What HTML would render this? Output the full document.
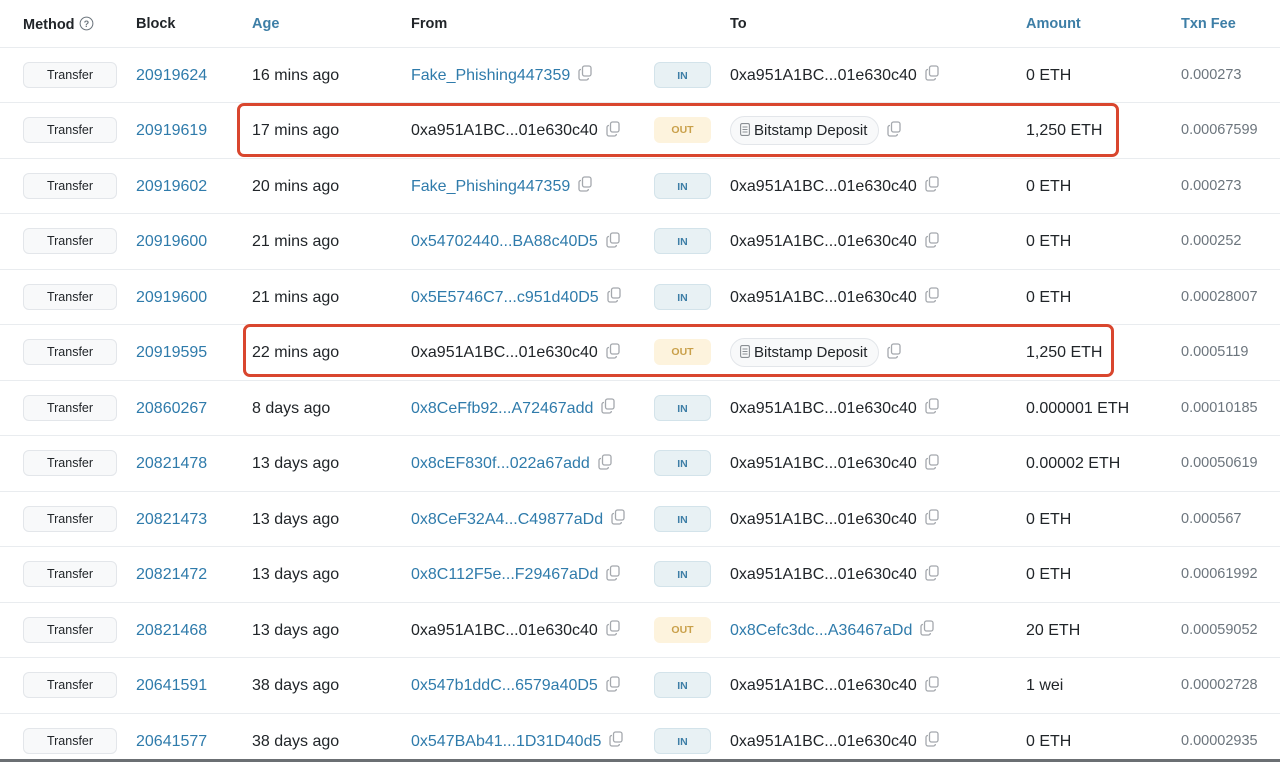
<!DOCTYPE html>
<html><head><meta charset="utf-8">
<style>
*{margin:0;padding:0;box-sizing:border-box}
body{width:1280px;height:762px;overflow:hidden;background:#fff;font-family:"Liberation Sans",Arial,sans-serif;color:#212529;position:relative}
.h{position:absolute;top:16px;font-size:14.5px;font-weight:bold;color:#212529}
.h.b{color:#3d7ea6}
.r{position:absolute;left:0;width:1280px;height:55.5px;border-top:1px solid #e9ecef}
.c{position:absolute;top:0;height:55px;line-height:55px;font-size:16px;white-space:nowrap}
.l{color:#2f7bab}
.m{position:absolute;left:23px;top:14px;width:94px;height:26px;border:1px solid #e3e6ea;background:#f8f9fa;border-radius:6px;font-size:12.5px;text-align:center;line-height:24px;color:#212529}
.bd{position:absolute;left:654px;top:14px;width:57px;height:26px;border-radius:6px;font-size:10.5px;font-weight:bold;text-align:center;line-height:26px}
.in{background:#e8f1f4;border:1px solid #d3e3ea;color:#3d7ea6}
.out{background:#fdf3dd;color:#c9a04a}
.fee{font-size:14.5px;color:#6c757d}
.cp{display:inline-block;vertical-align:middle;margin-left:8px;margin-top:-4px}
.pill{position:absolute;left:730px;top:13px;height:29px;width:149px;padding:0 0 0 9px;border:1px solid #e3e6ea;background:#f8f9fa;border-radius:15px;line-height:27px;font-size:15px}
.box{position:absolute;border:3px solid #d9462e;border-radius:7px}
</style></head><body>
<svg width="0" height="0" style="position:absolute"><defs><symbol id="cp" viewBox="0 0 14 16"><rect x="4.5" y="1" width="8.5" height="10" rx="2" fill="none" stroke="#a4a8ad" stroke-width="1.3"/><path d="M3 4.5H2.8A1.8 1.8 0 0 0 1 6.3V13a2 2 0 0 0 2 2h5.5a1.8 1.8 0 0 0 1.8-1.8V13" fill="none" stroke="#a4a8ad" stroke-width="1.3"/></symbol></defs></svg>

<div class="h" style="left:23px">Method <svg width="15" height="15" viewBox="0 0 16 16" style="vertical-align:-2px"><circle cx="8" cy="8" r="6.8" fill="none" stroke="#6c757d" stroke-width="1.1"/><text x="8" y="11.5" font-size="9.5" text-anchor="middle" fill="#6c757d" font-family="Liberation Sans">?</text></svg></div>
<div class="h" style="left:136px">Block</div>
<div class="h b" style="left:252px">Age</div>
<div class="h" style="left:411px">From</div>
<div class="h" style="left:730px">To</div>
<div class="h b" style="left:1026px">Amount</div>
<div class="h b" style="left:1181px">Txn Fee</div>

<div class="r" style="top:46.5px"><div class="m">Transfer</div><div class="c l" style="left:136px">20919624</div><div class="c" style="left:252px">16 mins ago</div><div class="c l" style="left:411px">Fake_Phishing447359<svg class="cp" width="14" height="16"><use href="#cp"/></svg></div><div class="bd in">IN</div><div class="c" style="left:730px">0xa951A1BC...01e630c40<svg class="cp" width="14" height="16"><use href="#cp"/></svg></div><div class="c" style="left:1026px">0 ETH</div><div class="c fee" style="left:1181px">0.000273</div></div>

<div class="r" style="top:102px"><div class="m">Transfer</div><div class="c l" style="left:136px">20919619</div><div class="c" style="left:252px">17 mins ago</div><div class="c" style="left:411px">0xa951A1BC...01e630c40<svg class="cp" width="14" height="16"><use href="#cp"/></svg></div><div class="bd out">OUT</div><div class="pill"><svg width="10" height="13" viewBox="0 0 10 13" style="vertical-align:-1px;margin-right:4px"><rect x="0.6" y="0.6" width="8.8" height="11.8" rx="1.5" fill="none" stroke="#8a8f94" stroke-width="1.1"/><path d="M2.5 4h5M2.5 6.5h5M2.5 9h5" stroke="#8a8f94" stroke-width="1"/></svg>Bitstamp Deposit</div><div class="c" style="left:879px"><svg class="cp" width="14" height="16"><use href="#cp"/></svg></div><div class="c" style="left:1026px">1,250 ETH</div><div class="c fee" style="left:1181px">0.00067599</div></div>

<div class="r" style="top:157.5px"><div class="m">Transfer</div><div class="c l" style="left:136px">20919602</div><div class="c" style="left:252px">20 mins ago</div><div class="c l" style="left:411px">Fake_Phishing447359<svg class="cp" width="14" height="16"><use href="#cp"/></svg></div><div class="bd in">IN</div><div class="c" style="left:730px">0xa951A1BC...01e630c40<svg class="cp" width="14" height="16"><use href="#cp"/></svg></div><div class="c" style="left:1026px">0 ETH</div><div class="c fee" style="left:1181px">0.000273</div></div>

<div class="r" style="top:213px"><div class="m">Transfer</div><div class="c l" style="left:136px">20919600</div><div class="c" style="left:252px">21 mins ago</div><div class="c l" style="left:411px">0x54702440...BA88c40D5<svg class="cp" width="14" height="16"><use href="#cp"/></svg></div><div class="bd in">IN</div><div class="c" style="left:730px">0xa951A1BC...01e630c40<svg class="cp" width="14" height="16"><use href="#cp"/></svg></div><div class="c" style="left:1026px">0 ETH</div><div class="c fee" style="left:1181px">0.000252</div></div>

<div class="r" style="top:268.5px"><div class="m">Transfer</div><div class="c l" style="left:136px">20919600</div><div class="c" style="left:252px">21 mins ago</div><div class="c l" style="left:411px">0x5E5746C7...c951d40D5<svg class="cp" width="14" height="16"><use href="#cp"/></svg></div><div class="bd in">IN</div><div class="c" style="left:730px">0xa951A1BC...01e630c40<svg class="cp" width="14" height="16"><use href="#cp"/></svg></div><div class="c" style="left:1026px">0 ETH</div><div class="c fee" style="left:1181px">0.00028007</div></div>

<div class="r" style="top:324px"><div class="m">Transfer</div><div class="c l" style="left:136px">20919595</div><div class="c" style="left:252px">22 mins ago</div><div class="c" style="left:411px">0xa951A1BC...01e630c40<svg class="cp" width="14" height="16"><use href="#cp"/></svg></div><div class="bd out">OUT</div><div class="pill"><svg width="10" height="13" viewBox="0 0 10 13" style="vertical-align:-1px;margin-right:4px"><rect x="0.6" y="0.6" width="8.8" height="11.8" rx="1.5" fill="none" stroke="#8a8f94" stroke-width="1.1"/><path d="M2.5 4h5M2.5 6.5h5M2.5 9h5" stroke="#8a8f94" stroke-width="1"/></svg>Bitstamp Deposit</div><div class="c" style="left:879px"><svg class="cp" width="14" height="16"><use href="#cp"/></svg></div><div class="c" style="left:1026px">1,250 ETH</div><div class="c fee" style="left:1181px">0.0005119</div></div>

<div class="r" style="top:379.5px"><div class="m">Transfer</div><div class="c l" style="left:136px">20860267</div><div class="c" style="left:252px">8 days ago</div><div class="c l" style="left:411px">0x8CeFfb92...A72467add<svg class="cp" width="14" height="16"><use href="#cp"/></svg></div><div class="bd in">IN</div><div class="c" style="left:730px">0xa951A1BC...01e630c40<svg class="cp" width="14" height="16"><use href="#cp"/></svg></div><div class="c" style="left:1026px">0.000001 ETH</div><div class="c fee" style="left:1181px">0.00010185</div></div>

<div class="r" style="top:435px"><div class="m">Transfer</div><div class="c l" style="left:136px">20821478</div><div class="c" style="left:252px">13 days ago</div><div class="c l" style="left:411px">0x8cEF830f...022a67add<svg class="cp" width="14" height="16"><use href="#cp"/></svg></div><div class="bd in">IN</div><div class="c" style="left:730px">0xa951A1BC...01e630c40<svg class="cp" width="14" height="16"><use href="#cp"/></svg></div><div class="c" style="left:1026px">0.00002 ETH</div><div class="c fee" style="left:1181px">0.00050619</div></div>

<div class="r" style="top:490.5px"><div class="m">Transfer</div><div class="c l" style="left:136px">20821473</div><div class="c" style="left:252px">13 days ago</div><div class="c l" style="left:411px">0x8CeF32A4...C49877aDd<svg class="cp" width="14" height="16"><use href="#cp"/></svg></div><div class="bd in">IN</div><div class="c" style="left:730px">0xa951A1BC...01e630c40<svg class="cp" width="14" height="16"><use href="#cp"/></svg></div><div class="c" style="left:1026px">0 ETH</div><div class="c fee" style="left:1181px">0.000567</div></div>

<div class="r" style="top:546px"><div class="m">Transfer</div><div class="c l" style="left:136px">20821472</div><div class="c" style="left:252px">13 days ago</div><div class="c l" style="left:411px">0x8C112F5e...F29467aDd<svg class="cp" width="14" height="16"><use href="#cp"/></svg></div><div class="bd in">IN</div><div class="c" style="left:730px">0xa951A1BC...01e630c40<svg class="cp" width="14" height="16"><use href="#cp"/></svg></div><div class="c" style="left:1026px">0 ETH</div><div class="c fee" style="left:1181px">0.00061992</div></div>

<div class="r" style="top:601.5px"><div class="m">Transfer</div><div class="c l" style="left:136px">20821468</div><div class="c" style="left:252px">13 days ago</div><div class="c" style="left:411px">0xa951A1BC...01e630c40<svg class="cp" width="14" height="16"><use href="#cp"/></svg></div><div class="bd out">OUT</div><div class="c l" style="left:730px">0x8Cefc3dc...A36467aDd<svg class="cp" width="14" height="16"><use href="#cp"/></svg></div><div class="c" style="left:1026px">20 ETH</div><div class="c fee" style="left:1181px">0.00059052</div></div>

<div class="r" style="top:657px"><div class="m">Transfer</div><div class="c l" style="left:136px">20641591</div><div class="c" style="left:252px">38 days ago</div><div class="c l" style="left:411px">0x547b1ddC...6579a40D5<svg class="cp" width="14" height="16"><use href="#cp"/></svg></div><div class="bd in">IN</div><div class="c" style="left:730px">0xa951A1BC...01e630c40<svg class="cp" width="14" height="16"><use href="#cp"/></svg></div><div class="c" style="left:1026px">1 wei</div><div class="c fee" style="left:1181px">0.00002728</div></div>

<div class="r" style="top:712.5px"><div class="m">Transfer</div><div class="c l" style="left:136px">20641577</div><div class="c" style="left:252px">38 days ago</div><div class="c l" style="left:411px">0x547BAb41...1D31D40d5<svg class="cp" width="14" height="16"><use href="#cp"/></svg></div><div class="bd in">IN</div><div class="c" style="left:730px">0xa951A1BC...01e630c40<svg class="cp" width="14" height="16"><use href="#cp"/></svg></div><div class="c" style="left:1026px">0 ETH</div><div class="c fee" style="left:1181px">0.00002935</div></div>

<div style="position:absolute;left:0;top:759px;width:1280px;height:3px;background:#6b6f73"></div>

<div class="box" style="left:237px;top:103px;width:882px;height:54px"></div>
<div class="box" style="left:243px;top:324px;width:871px;height:53px"></div>
</body></html>
